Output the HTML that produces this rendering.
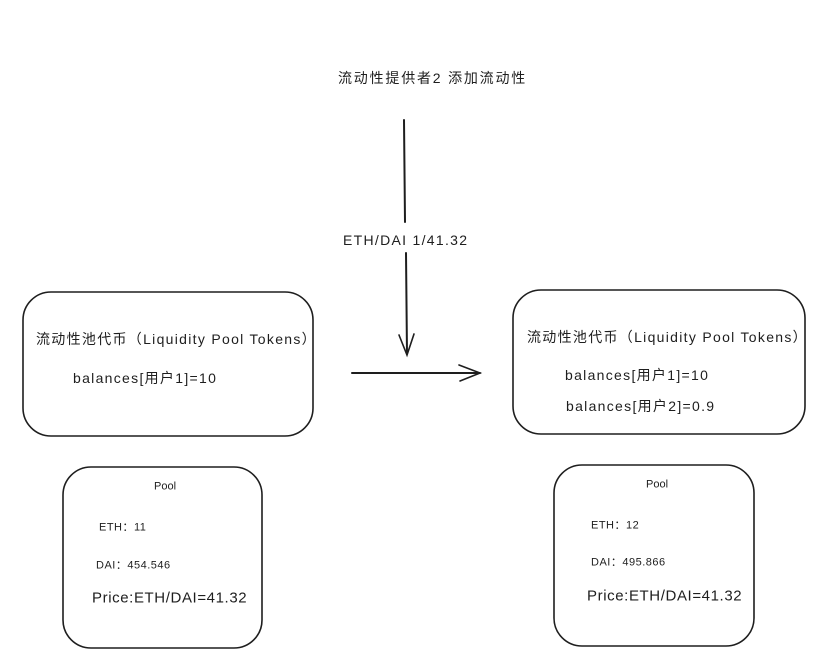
<!DOCTYPE html>
<html><head><meta charset="utf-8"><style>
body{margin:0;width:822px;height:669px;background:#fff;position:relative;overflow:hidden;font-family:"Liberation Sans","Noto Sans CJK SC",sans-serif;color:#1e1e1e}
.t{position:absolute;white-space:nowrap;line-height:1;transform:translateY(-50%)}
.m{letter-spacing:1.3px}
svg{position:absolute;left:0;top:0}
</style></head><body>
<svg width="822" height="669" fill="none" stroke="#1e1e1e" stroke-linecap="round">
<rect x="23" y="292" width="290" height="144" rx="28" stroke-width="1.6"/>
<rect x="513" y="290" width="292" height="144" rx="28" stroke-width="1.6"/>
<rect x="63" y="467" width="199" height="181" rx="28" stroke-width="1.6"/>
<rect x="554" y="465" width="200" height="181" rx="28" stroke-width="1.6"/>
<path d="M404 120 L405 222 M406 253 L407 354" stroke-width="2"/>
<path d="M399 335 L407 355 L414 334" stroke-width="1.6"/>
<path d="M352 373 L480 373" stroke-width="2"/>
<path d="M459 365 L480 373 L460 381" stroke-width="1.6"/>
</svg>
<div class="t" style="left:338px;top:78px;font-size:14px;letter-spacing:1.8px">流动性提供者2 添加流动性</div>
<div class="t m" style="left:343px;top:240px;font-size:14px">ETH/DAI 1/41.32</div>
<div class="t m" style="left:36px;top:339px;font-size:14px">流动性池代币（Liquidity Pool Tokens）</div>
<div class="t m" style="left:73px;top:378px;font-size:14px">balances[用户1]=10</div>
<div class="t m" style="left:527px;top:337px;font-size:14px">流动性池代币（Liquidity Pool Tokens）</div>
<div class="t m" style="left:565px;top:375px;font-size:14px">balances[用户1]=10</div>
<div class="t m" style="left:566px;top:406px;font-size:14px">balances[用户2]=0.9</div>
<div class="t" style="left:154px;top:487px;font-size:11px">Pool</div>
<div class="t" style="left:99px;top:528px;font-size:11px;letter-spacing:.5px">ETH：11</div>
<div class="t" style="left:96px;top:566px;font-size:11px;letter-spacing:.5px">DAI：454.546</div>
<div class="t" style="left:92px;top:598px;font-size:15px;letter-spacing:.6px">Price:ETH/DAI=41.32</div>
<div class="t" style="left:646px;top:485px;font-size:11px">Pool</div>
<div class="t" style="left:591px;top:526px;font-size:11px;letter-spacing:.5px">ETH：12</div>
<div class="t" style="left:591px;top:563px;font-size:11px;letter-spacing:.5px">DAI：495.866</div>
<div class="t" style="left:587px;top:596px;font-size:15px;letter-spacing:.6px">Price:ETH/DAI=41.32</div>
</body></html>
